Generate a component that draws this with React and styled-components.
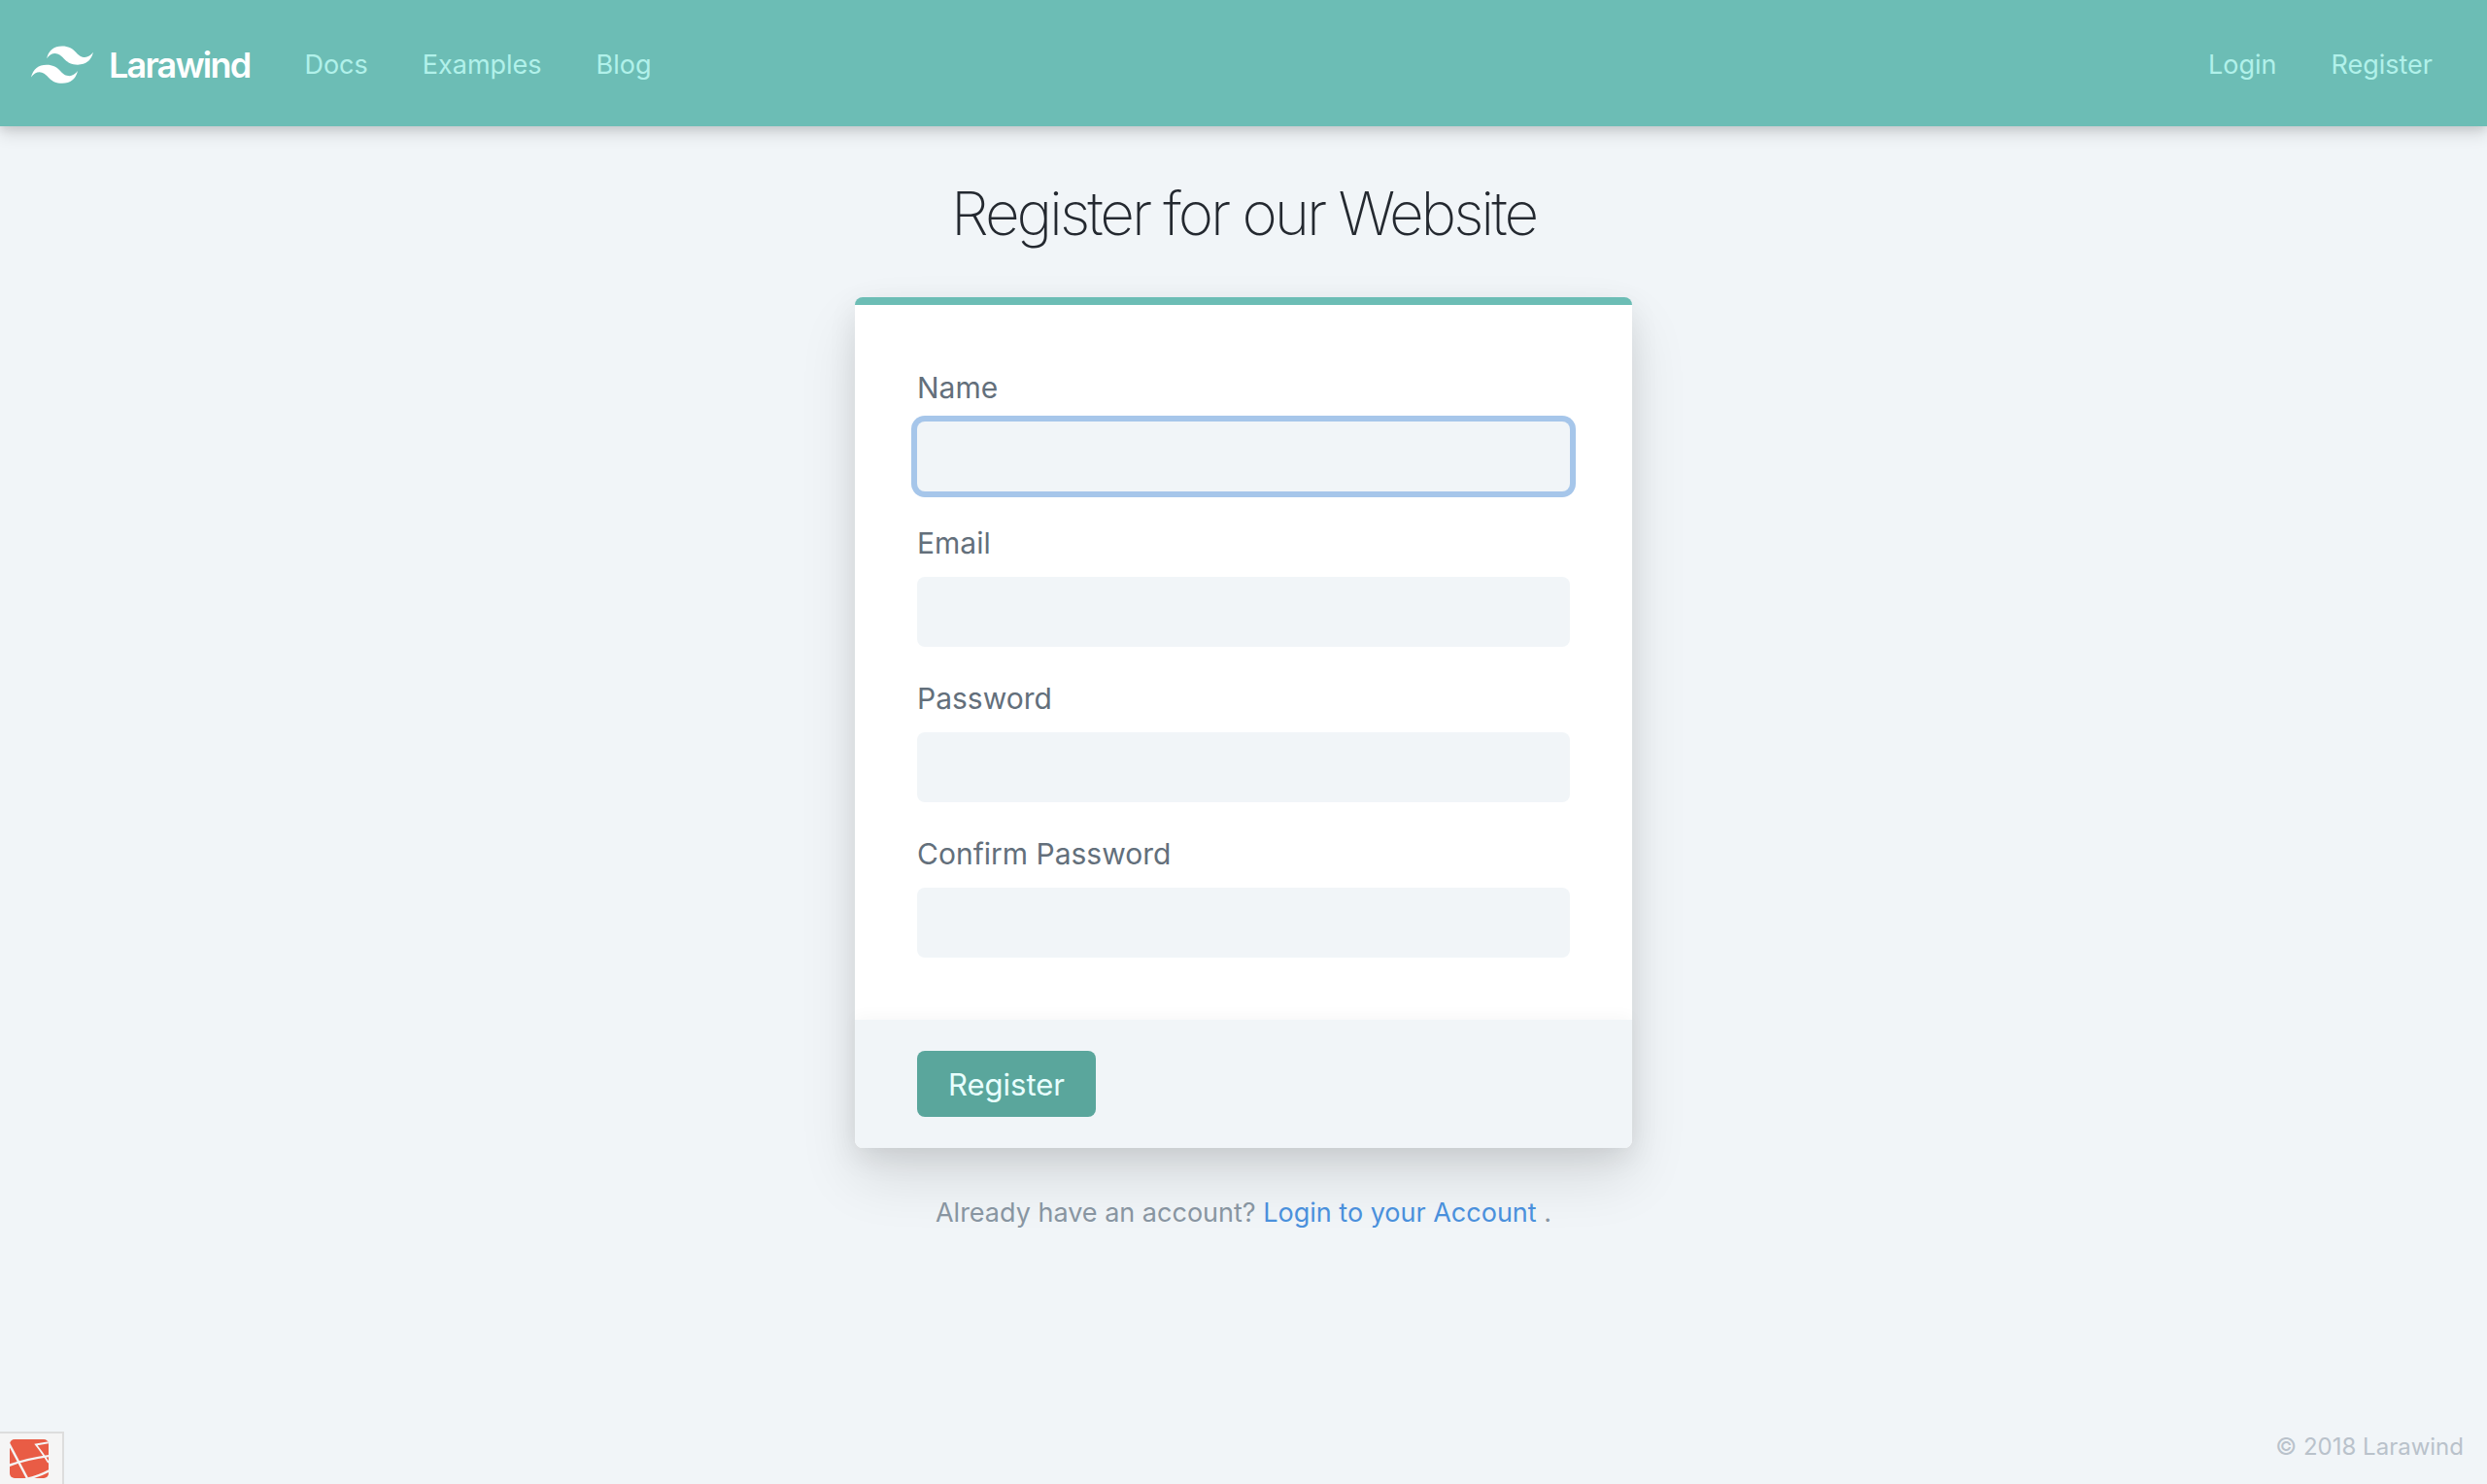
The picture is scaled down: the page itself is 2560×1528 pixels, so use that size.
import React from 'react';
import styled, { createGlobalStyle } from 'styled-components';

const GlobalStyle = createGlobalStyle`
  *, *::before, *::after { box-sizing: border-box; }
  body {
    margin: 0;
    background: #f1f5f8;
    color: #242930;
    font-family: Inter, "Liberation Sans", sans-serif;
    font-size: 31px;
    -webkit-font-smoothing: antialiased;
  }
`;

const TIGHT = '-0.05em';

const Page = styled.div`
  min-height: 100vh;
  display: flex;
  flex-direction: column;
`;

const Header = styled.header`
  display: flex;
  align-items: center;
  padding: 34px 32px 30px;
  background: #6cbdb5;
  box-shadow: 0 8px 16px rgba(0, 0, 0, 0.12), 0 4px 8px rgba(0, 0, 0, 0.08);
`;

const Brand = styled.a`
  display: flex;
  align-items: center;
  gap: 16px;
  margin-right: 28px;
  color: #fff;
  font-size: 36px;
  font-weight: 600;
  line-height: 48px;
  letter-spacing: ${TIGHT};
  text-decoration: none;
`;

const Nav = styled.nav`
  display: flex;
  margin-left: ${(p) => (p.$end ? 'auto' : '0')};
`;

const NavLink = styled.a`
  padding: 16px 28px;
  color: #b1f1ea;
  font-size: 27px;
  line-height: 34px;
  text-decoration: none;
  ${(p) => p.$last && 'padding-right: 24px;'}
`;

const Main = styled.main`
  flex: 1;
  display: flex;
  flex-direction: column;
  align-items: center;
  padding-top: 48px;
`;

const Title = styled.h1`
  margin: 0 0 44px;
  font-size: 62px;
  line-height: 84px;
  font-weight: 200;
  letter-spacing: ${TIGHT};
`;

const Card = styled.form`
  width: 100%;
  max-width: 800px;
  border-top: 8px solid #6cbdb5;
  border-radius: 8px;
  background: #fff;
  box-shadow: 0 30px 60px rgba(0, 0, 0, 0.11), 0 10px 30px rgba(0, 0, 0, 0.08);
`;

const Fields = styled.div`
  display: flex;
  flex-direction: column;
  gap: 32px;
  padding: 64px;
`;

const Field = styled.div`
  display: flex;
  flex-direction: column;
  gap: 14px;
`;

const Label = styled.label`
  color: #636f7b;
  font-size: 30px;
  line-height: 42px;
`;

const Input = styled.input`
  width: 100%;
  height: 72px;
  padding: 16px;
  border: 0;
  border-radius: 8px;
  background: #f1f5f8;
  color: #242930;
  font: inherit;
  caret-color: transparent;
  outline: none;

  &:focus {
    box-shadow: 0 0 0 6px #a6c6ea;
  }
`;

const CardFooter = styled.div`
  padding: 32px 64px;
  border-radius: 0 0 8px 8px;
  background: #f1f5f8;
  box-shadow: 0 -4px 16px rgba(0, 0, 0, 0.03);
`;

const Submit = styled.button`
  display: block;
  padding: 15px 32px 13px;
  border: 0;
  border-radius: 8px;
  background: #5aa69c;
  color: #e8fffe;
  font: inherit;
  line-height: 40px;
`;

const Prompt = styled.p`
  margin: 48px 0 0;
  color: #8895a1;
  font-size: 27px;
  line-height: 38px;
`;

const PromptLink = styled.a`
  color: #4a90dc;
  text-decoration: none;
`;

const Footer = styled.footer`
  display: flex;
  align-items: flex-end;
  justify-content: space-between;
`;

const DebugButton = styled.button`
  display: flex;
  padding: 6px 14px 6px 10px;
  border: 2px solid #dddddd;
  border-width: 2px 2px 0 0;
  background: #f5f5f5;
`;

const Copyright = styled.small`
  padding: 0 24px 23px 0;
  color: #b9c2cb;
  font-size: 24px;
  line-height: 30px;
`;

const FIELDS = [
  { id: 'name', label: 'Name', type: 'text' },
  { id: 'email', label: 'Email', type: 'email' },
  { id: 'password', label: 'Password', type: 'password' },
  { id: 'password-confirm', label: 'Confirm Password', type: 'password' },
];

const WindLogo = () => (
  <svg width="64" height="40" viewBox="0 0 54 33" fill="#fff" aria-hidden="true">
    <path d="M13.5 10.8Q16.2 0 27 0c10.8 0 12.15 8.1 17.55 9.45q5.4 1.35 9.45-4.05-2.7 10.8-13.5 10.8c-10.8 0-12.15-8.1-17.55-9.45Q17.55 5.4 13.5 10.8zM0 27q2.7-10.8 13.5-10.8c10.8 0 12.15 8.1 17.55 9.45q5.4 1.35 9.45-4.05-2.7 10.8-13.5 10.8c-10.8 0-12.15-8.1-17.55-9.45Q4.05 21.6 0 27z" />
  </svg>
);

const GridLogo = () => (
  <svg width="40" height="40" viewBox="0 0 40 40" aria-hidden="true">
    <defs>
      <clipPath id="tile"><rect width="40" height="40" rx="5" /></clipPath>
    </defs>
    <g clipPath="url(#tile)">
      <rect width="40" height="40" fill="#e95c45" />
      <g fill="none" stroke="#f5f5f5" strokeWidth="2.4">
        <path d="M-1 4L18 40" />
        <path d="M-1 27Q18 20 41 17" />
        <path d="M41 3L27 5.5Q33 13 40 24" strokeWidth="1.9" />
        <path d="M17 41Q30 38 41 32" />
      </g>
    </g>
  </svg>
);

export default function App() {
  return (
    <>
      <GlobalStyle />
      <Page>
        <Header>
          <Brand href="#home"><WindLogo />Larawind</Brand>
          <Nav aria-label="Main">
            <NavLink href="#docs">Docs</NavLink>
            <NavLink href="#examples">Examples</NavLink>
            <NavLink href="#blog">Blog</NavLink>
          </Nav>
          <Nav $end aria-label="Account">
            <NavLink href="#login">Login</NavLink>
            <NavLink $last href="#register">Register</NavLink>
          </Nav>
        </Header>
        <Main>
          <Title>Register for our Website</Title>
          <Card onSubmit={(e) => e.preventDefault()}>
            <Fields>
              {FIELDS.map((f, i) => (
                <Field key={f.id}>
                  <Label htmlFor={f.id}>{f.label}</Label>
                  <Input id={f.id} name={f.id} type={f.type} autoFocus={i === 0} />
                </Field>
              ))}
            </Fields>
            <CardFooter>
              <Submit type="submit">Register</Submit>
            </CardFooter>
          </Card>
          <Prompt>
            Already have an account? <PromptLink href="#login">Login to your Account</PromptLink> .
          </Prompt>
        </Main>
        <Footer>
          <DebugButton type="button" aria-label="Open debug bar"><GridLogo /></DebugButton>
          <Copyright>© 2018 Larawind</Copyright>
        </Footer>
      </Page>
    </>
  );
}
